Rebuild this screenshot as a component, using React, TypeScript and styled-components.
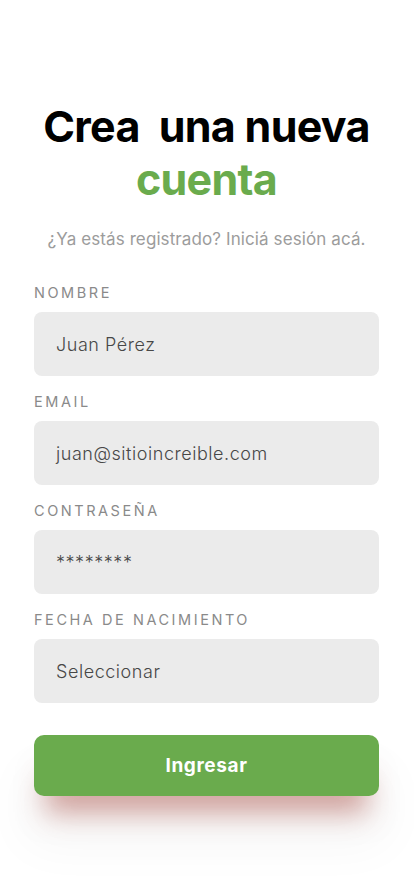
import React from "react";
import styled, { createGlobalStyle } from "styled-components";

const Global = createGlobalStyle`
  * { box-sizing: border-box; }
  html, body { margin: 0; padding: 0; background: #ffffff; }
  body { font-family: "Inter", "Open Sans", sans-serif; }
`;

const Page = styled.main`
  width: 414px;
  min-height: 896px;
  padding: 100px 35px 0 34px;
  display: flex;
  flex-direction: column;
  background: #fff;
`;

const Title = styled.h1`
  margin: 0;
  text-align: center;
  font-family: "Inter", sans-serif;
  font-weight: 700;
  font-size: 43px;
  line-height: 53px;
  letter-spacing: -0.7px;
  color: #000;
  white-space: pre;
`;

const Accent = styled.span`
  color: #6aab4d;
`;

const Subtitle = styled.p`
  margin: 22px 0 0;
  text-align: center;
  font-family: "Inter", sans-serif;
  font-size: 17px;
  line-height: 22px;
  font-weight: 400;
  letter-spacing: 0.1px;
  color: #9c9c9c;
`;

const Form = styled.form`
  margin-top: 34px;
  display: flex;
  flex-direction: column;
`;

const Field = styled.div`
  display: flex;
  flex-direction: column;
  gap: 11px;
  margin-bottom: 17px;
`;

const Label = styled.label`
  font-family: "Inter", sans-serif;
  font-size: 14.5px;
  line-height: 17px;
  letter-spacing: 2.55px;
  color: #8a8a8a;
  text-transform: uppercase;
`;

const Input = styled.div`
  height: 64px;
  border-radius: 8px;
  background: #ebebeb;
  display: flex;
  align-items: center;
  padding: 0 22px;
  font-family: "Inter", sans-serif;
  font-size: 18px;
  letter-spacing: 0.55px;
  color: #474747;
  font-weight: 300;
`;

const Button = styled.button`
  margin-top: 15px;
  height: 61px;
  border: none;
  border-radius: 10px;
  background: #6aab4d;
  color: #fff;
  font-family: "Inter", sans-serif;
  font-weight: 700;
  font-size: 19px;
  letter-spacing: 0.6px;
  box-shadow: 0 28px 28px -12px rgba(165, 70, 60, 0.5),
    0 40px 50px 10px rgba(0, 0, 0, 0.035);
`;

const fields = [
  { label: "Nombre", value: "Juan Pérez" },
  { label: "Email", value: "juan@sitioincreible.com" },
  { label: "Contraseña", value: "********" },
  { label: "Fecha de nacimiento", value: "Seleccionar" },
];

export default function App() {
  return (
    <>
      <Global />
      <Page>
        <Title>
          {"Crea  una nueva\n"}
          <Accent>cuenta</Accent>
        </Title>
        <Subtitle>¿Ya estás registrado? Iniciá sesión acá.</Subtitle>
        <Form>
          {fields.map((f) => (
            <Field key={f.label}>
              <Label>{f.label}</Label>
              <Input>{f.value}</Input>
            </Field>
          ))}
          <Button type="button">Ingresar</Button>
        </Form>
      </Page>
    </>
  );
}
